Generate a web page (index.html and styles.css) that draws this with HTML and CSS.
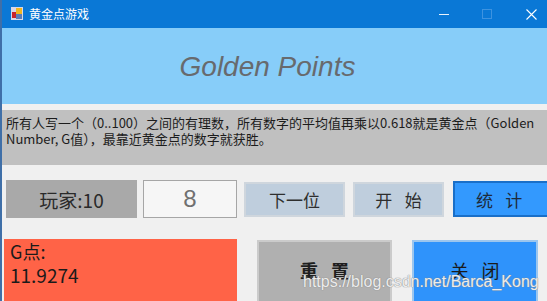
FILE: index.html
```html
<!DOCTYPE html>
<html lang="zh-CN">
<head>
    <meta charset="UTF-8">
    <meta name="viewport" content="width=device-width, initial-scale=1.0">
    <title>黄金点游戏</title>
    <link rel="stylesheet" href="styles.css">
</head>
<body>
    <div class="window">
        <div class="titlebar">
            <svg class="app-icon" width="12" height="13" viewBox="0 0 12 13">
                <rect x="0" y="0" width="12" height="13" fill="#d8d8e8"/>
                <rect x="5" y="1" width="6" height="6" fill="#f2b620"/>
                <rect x="1" y="5" width="4" height="6" fill="#c8242c"/>
                <rect x="5" y="7" width="6" height="5" fill="#5a7fb8"/>
            </svg>
            <span class="title-text">黄金点游戏</span>
            <div class="controls">
                <span class="ctl ctl-min"></span>
                <span class="ctl ctl-max"></span>
                <svg class="ctl-close" width="11" height="11" viewBox="0 0 11 11">
                    <path d="M0.5 0.5 L10.5 10.5 M10.5 0.5 L0.5 10.5" stroke="#ffffff" stroke-width="1.1"/>
                </svg>
            </div>
        </div>

        <div class="banner">Golden Points</div>

        <div class="rules">所有人写一个（0..100）之间的有理数，所有数字的平均值再乘以0.618就是黄金点（Golden Number, G值），最靠近黄金点的数字就获胜。</div>

        <div class="toolbar">
            <div class="player-label">玩家:10</div>
            <div class="number-box">8</div>
            <button class="btn btn-next">下一位</button>
            <button class="btn btn-start">开 始</button>
            <button class="btn btn-stats">统 计</button>
        </div>

        <div class="bottom-row">
            <div class="result">
                <div>G点:</div>
                <div class="result-value">11.9274</div>
            </div>
            <button class="btn btn-reset">重 置</button>
            <button class="btn btn-close">关 闭</button>
            <span class="watermark">https://blog.csdn.net/Barca_Kong</span>
        </div>
    </div>
</body>
</html>
```

FILE: styles.css
```css
body {
    margin: 0;
    padding: 0;
    font-family: "Noto Sans CJK SC", "Noto Sans", sans-serif;
    background-color: #f0f0f0;
    overflow: hidden;
}

.window {
    width: 547px;
    height: 301px;
    border-left: 2px solid #3f6fa8;
    box-sizing: border-box;
    background-color: #f0f0f0;
    overflow: hidden;
}

.titlebar {
    height: 28px;
    background-color: #0a78d6;
    display: flex;
    align-items: center;
    color: #ffffff;
}

.app-icon {
    margin-left: 9px;
    margin-top: -1px;
}

.title-text {
    margin-left: 6px;
    font-size: 12px;
    line-height: 14px;
}

.controls {
    margin-left: auto;
    display: flex;
    align-items: center;
}

.ctl-min {
    width: 10px;
    height: 1px;
    background-color: #e8f1fb;
    margin-right: 33px;
}

.ctl-max {
    width: 8px;
    height: 8px;
    border: 1px solid #3d93e0;
    margin-right: 34px;
}

.ctl-close {
    margin-right: 10px;
}

.banner {
    height: 76px;
    background-color: #87cdf9;
    display: flex;
    align-items: center;
    justify-content: center;
    font-family: "Liberation Sans", Arial, sans-serif;
    font-style: italic;
    font-size: 28px;
    color: #676a6e;
    padding-right: 14px;
    padding-top: 2px;
    box-sizing: border-box;
}

.rules {
    margin-top: 6px;
    height: 55px;
    box-sizing: border-box;
    background-color: #c0c0c0;
    padding: 5px 0 0 4px;
    font-size: 13px;
    line-height: 16px;
    color: #1c1c1c;
}

.toolbar {
    display: flex;
    align-items: center;
    margin-top: 15px;
    height: 38px;
    padding-left: 4px;
}

.toolbar > * {
    flex-shrink: 0;
}

.player-label {
    width: 131px;
    height: 38px;
    background-color: #a9a9a9;
    display: flex;
    align-items: center;
    justify-content: center;
    font-size: 19px;
    color: #2a2a2a;
}

.number-box {
    margin-left: 6px;
    width: 94px;
    height: 38px;
    box-sizing: border-box;
    background-color: #f6f6f6;
    border: 1px solid #a6a6a6;
    display: flex;
    align-items: center;
    justify-content: center;
    font-family: "Liberation Sans", Arial, sans-serif;
    font-size: 24px;
    color: #707070;
}

.btn {
    font-family: "Noto Sans CJK SC", "Noto Sans", sans-serif;
    padding: 0;
    box-sizing: border-box;
    display: flex;
    align-items: center;
    justify-content: center;
    word-spacing: 0.5em;
    cursor: pointer;
}

.btn-next,
.btn-start {
    height: 35px;
    background-color: #bfcedd;
    border: 2px solid #cfd6dd;
    font-size: 17px;
    color: #2e2e2e;
}

.btn-next {
    margin-left: 7px;
    width: 101px;
}

.btn-start {
    margin-left: 8px;
    width: 91px;
}

.btn-stats {
    margin-left: 9px;
    width: 110px;
    height: 36px;
    background-color: #3399fe;
    border: 2px solid #1a6fc8;
    font-size: 17px;
    color: #1e2a3a;
    justify-content: flex-start;
    padding-left: 21px;
}

.bottom-row {
    position: relative;
    display: flex;
    align-items: flex-start;
    margin-top: 21px;
    padding-left: 2px;
}

.result {
    width: 233px;
    height: 70px;
    background-color: #ff6347;
    box-sizing: border-box;
    padding: 1px 0 0 6px;
    font-size: 18px;
    line-height: 23px;
    color: #1a1a1a;
}

.result-value {
    font-size: 19px;
}

.btn-reset {
    margin-left: 20px;
    margin-top: 1px;
    width: 135px;
    height: 70px;
    background-color: #b0b0b0;
    border: 2px solid #cbcbcb;
    font-size: 18px;
    font-weight: bold;
    color: #1e1e1e;
    padding-bottom: 10px;
}

.btn-close {
    margin-left: 20px;
    margin-top: 1px;
    width: 126px;
    height: 70px;
    background-color: #2f93fb;
    border: 2px solid #9cc6ee;
    font-size: 18px;
    color: #1a1a1a;
    padding-bottom: 10px;
}

.watermark {
    position: absolute;
    left: 301px;
    top: 34px;
    font-family: "Liberation Sans", Arial, sans-serif;
    font-size: 16px;
    color: rgba(255, 255, 255, 0.85);
    text-shadow: 0 0 1px #8a8a8a, 0 0 1px #8a8a8a;
    white-space: nowrap;
}
```
